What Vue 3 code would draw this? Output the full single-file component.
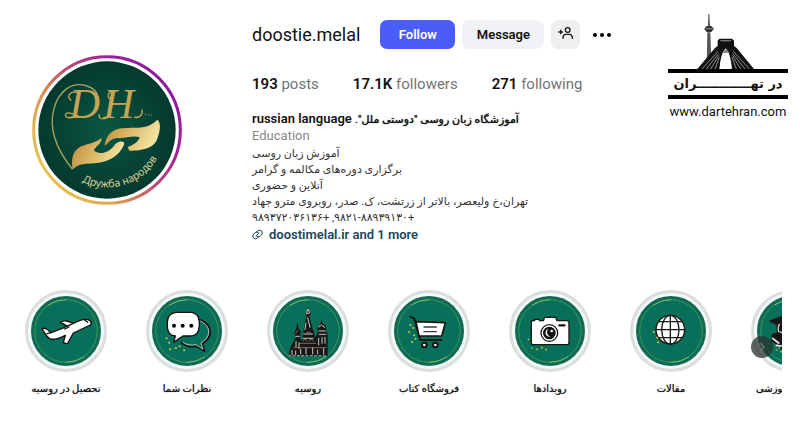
<script setup>

import { ref } from 'vue'

const username = ref("doostie.melal");

const stats = ref([
  { value: "193", label: "posts" },
  { value: "17.1K", label: "followers" },
  { value: "271", label: "following" }
]);

const bio = ref([
  "آموزش زبان روسی",
  "برگزاری دوره‌های مکالمه و گرامر",
  "آنلاین و حضوری",
  "تهران،خ ولیعصر، بالاتر از زرتشت، ک. صدر، روبروی مترو جهاد",
  "+۹۸۲۱-۸۸۹۳۹۱۳۰, +۹۸۹۳۷۲۰۳۶۱۳۶"
]);

const highlights = ref([
  { icon: "plane", label: "تحصیل در روسیه" },
  { icon: "chat", label: "نظرات شما" },
  { icon: "castle", label: "روسیه" },
  { icon: "cart", label: "فروشگاه کتاب" },
  { icon: "camera", label: "رویدادها" },
  { icon: "globe", label: "مقالات" },
  { icon: "graduate", label: "آموزشی" }
]);

const following = ref(false);

const toggleFollow = () => {
  following.value = !following.value;
};

const strip = ref(null);

const nextHighlights = () => {
  strip.value.scrollBy({ left: 242, behavior: "smooth" });
};

</script>

<template>
  <div class="page">
    <header class="profile">
      <svg class="avatar" viewBox="0 0 450 450" role="img" aria-label="Дружба народов">
        <defs>
          <linearGradient id="ring" x1="0.1" y1="0.8" x2="0.9" y2="0.2">
            <stop offset="0" stop-color="#e8c04e" />
            <stop offset="0.25" stop-color="#dda04c" />
            <stop offset="0.5" stop-color="#c4506c" />
            <stop offset="0.8" stop-color="#a0209a" />
            <stop offset="1" stop-color="#8c1c9e" />
          </linearGradient>
          <radialGradient id="disc">
            <stop offset="0" stop-color="#0a5643" />
            <stop offset="1" stop-color="#04392e" />
          </radialGradient>
          <linearGradient id="gold" x1="0" y1="0" x2="1" y2="0.3">
            <stop offset="0" stop-color="#b8893a" />
            <stop offset="0.5" stop-color="#dcb765" />
            <stop offset="1" stop-color="#f3e3a0" />
          </linearGradient>
          <path id="motto" d="M150 380 A172 172 0 0 0 390 175" />
        </defs>
        <circle cx="225" cy="225" r="220" fill="#fff" stroke="url(#ring)" stroke-width="9" />
        <circle cx="225" cy="225" r="206" fill="url(#disc)" />
        <path d="M121 342 C75 285 48 225 66 160 C82 105 122 78 165 93 C184 99 196 110 199 128" fill="none" stroke="#a9a35c" stroke-width="4" />
        <text class="monogram" x="112 214" y="188">DH</text>
        <path d="M138 188 C126 174 102 168 100 180 C100 192 124 190 140 180 M134 112 C112 108 102 128 118 136 M226 188 C212 196 198 190 202 178 M250 108 C232 104 222 124 234 132 M306 186 C322 192 334 178 330 164" fill="none" stroke="#c6a455" stroke-width="4" />
        <path d="M338 178 h5 m5 2 h4 m5 0 h3" stroke="#9a965c" stroke-width="3" />
        <path d="M122 344 C118 315 120 292 140 278 C160 266 181 269 209 249 C210 263 194 272 185 286 C202 303 233 293 251 266 C266 256 280 259 276 269 C260 305 229 318 200 323 C163 327 138 323 122 344 Z" fill="url(#gold)" />
        <path d="M218 273 C221 245 237 224 268 220 C307 215 347 226 376 194 C389 204 383 232 377 248 C369 279 331 287 292 287 L287 276 C302 271 317 264 323 247 C302 240 279 252 255 249 C236 251 227 265 218 273 Z" fill="url(#gold)" />
        <text class="motto"><textPath href="#motto">Дружба народов</textPath></text>
      </svg>

      <section class="details">
        <div class="title-row">
          <h1 class="username">{{ username }}</h1>
          <button type="button" class="btn btn-primary" @click="toggleFollow">{{ following ? "Following" : "Follow" }}</button>
          <button type="button" class="btn btn-message">Message</button>
          <button type="button" class="btn btn-icon" aria-label="Similar accounts">
            <svg viewBox="0 0 45 36" width="15" height="12" fill="none" stroke="#161616" stroke-width="4">
              <circle cx="29" cy="9" r="7" />
              <path d="M15 35 V31 Q16 22 24 22 H34 Q42 22 43 31 V35 M1 15 H15 M8 8 V22" />
            </svg>
          </button>
          <button type="button" class="more" aria-label="Options">
            <svg viewBox="0 0 20 6" width="20" height="6"><circle cx="3" cy="3" r="2" /><circle cx="10" cy="3" r="2" /><circle cx="17" cy="3" r="2" /></svg>
          </button>
        </div>

        <ul class="stats">
          <li v-for="stat in stats" :key="stat.label"><b>{{ stat.value }}</b> {{ stat.label }}</li>
        </ul>

        <div class="bio">
          <h2 dir="rtl"><span class="persian">آموزشگاه زبان روسی "دوستی ملل".</span> russian language</h2>
          <p class="category">Education</p>
          <p v-for="line in bio" :key="line" dir="rtl">{{ line }}</p>
          <a href="#" class="site">
            <svg viewBox="0 0 33 33" width="11" height="11" fill="none" stroke="#24445a" stroke-width="3" stroke-linecap="round">
              <path d="M13 9 L18 5 Q24 1 29 6 Q33 12 28 18 L24 22 Q19 26 14 22 M20 24 L15 28 Q9 32 4 27 Q0 21 5 15 L9 11 Q14 7 19 11 M12 21 L21 12" />
            </svg>
            <span>doostimelal.ir and 1 more</span>
          </a>
        </div>
      </section>

      <aside class="brand">
        <svg class="skyline" viewBox="0 0 360 165">
          <path d="M121 0 h3 l2 36 h-6 Z M118 55 h9 l4 110 h-15 Z" fill="#555" />
          <path d="M108 44 L116 36 H130 L138 44 L130 54 H116 Z" fill="#333" />
          <path d="M110 44 H136" stroke="#bbb" stroke-width="2" />
          <path d="M154 74 H192 L198 80 V96 L206 102 L258 165 H191 C190 140 184 125 173 116 C162 125 156 140 155 165 H88 L141 102 L149 96 V80 Z" fill="#111" />
          <path d="M173 103 Q157 119 155 165 H191 Q189 119 173 103" fill="#fff" />
          <path d="M163 117 L173 105 L183 117 Z" fill="#888" />
          <path d="M157 80 H189" stroke="#777" stroke-width="4" />
          <path d="M102 165 L150 112 M115 165 L152 118 M128 165 L153 124 M141 165 L154 130 M244 165 L196 112 M231 165 L194 118 M218 165 L193 124 M205 165 L192 130" stroke="#ccc" stroke-width="2" />
        </svg>
        <div class="brand-name" dir="rtl">در تهــــــــــــران</div>
        <a href="#">www.dartehran.com</a>
      </aside>
    </header>

    <nav class="highlights" aria-label="Highlights">
      <div class="strip" ref="strip">
        <a v-for="item in highlights" :key="item.icon" href="#" class="highlight" :class="item.icon">
          <span class="circle">
            <svg viewBox="0 0 246 246" stroke-linejoin="round" stroke-linecap="round">
              <circle cx="123" cy="123" r="102" fill="#08705a" stroke="#186553" stroke-width="6" />
              <circle cx="123" cy="123" r="94" fill="none" stroke="#3c9355" stroke-width="3" />
              <path d="M70 45 A94 94 0 0 1 123 29 M176 201 A94 94 0 0 1 123 217" fill="none" stroke="#7fb866" stroke-width="3" />

              <g v-if="item.icon === 'plane'" fill="#fff" stroke="#111" stroke-width="4">
                <path d="M106 97 Q114 91 125 93 L150 101 L130 110 Z" />
                <path d="M51 116 Q58 113 66 118 L78 128 L112 115 L158 94 Q181 83 196 92 Q202 98 196 105 L145 129 L128 160 Q122 162 115 158 L121 136 Q91 151 76 147 Q65 142 51 116 Z" />
                <path d="M66 131 L78 128 M119 117 L132 111 M180 91 L188 97" fill="none" />
              </g>

              <g v-else-if="item.icon === 'chat'">
                <path d="M162 90 C203 105 199 143 169 161 L175 183 L151 168 Q123 174 106 157" fill="none" stroke="#111" stroke-width="6" />
                <path d="M163 93 C198 109 195 141 165 159 L171 178 L150 164 Q126 169 111 157" fill="none" stroke="#fff" stroke-width="2" />
                <path d="M90 67 H136 Q159 70 160 96 V108 Q158 138 134 138 H111 L83 157 L88 138 Q65 136 64 110 V96 Q65 70 90 67 Z" fill="#fff" stroke="#111" stroke-width="4" />
                <circle v-for="x in [84, 110, 136]" :key="x" :cx="x" cy="107" r="6" />
                <path d="M61 145 h1 M69 158 h1 M72 178 h1 M89 174 h1 M100 169 h1 M114 181 h1" stroke="#b5bd48" stroke-width="6" />
              </g>

              <g v-else-if="item.icon === 'castle'" fill="#171717">
                <path d="M123 48 L126 62 L132 71 L127 78 L137 117 L143 134 V145 L153 126 L150 113 L160 104 L163 88 L166 100 L177 109 L177 121 L182 132 V198 H64 L70 172 L79 156 L86 145 L82 128 L88 115 L91 94 L95 117 L102 124 L98 144 L106 152 L109 122 L119 78 L114 71 L121 62 Z" />
                <path d="M123 58 L128 69 L119 71 Z M122 83 L129 112 M117 99 L114 119 M110 132 H136 M108 145 H138 M86 139 L97 139 M155 111 L164 105 L173 112 M156 123 H175 M157 133 H177 M87 154 V170 M96 158 V176 M155 145 V165 M165 142 V160 M174 142 V160 M75 181 V194 M86 183 V194 M101 178 V192 M117 174 V192 M137 174 V192 M152 180 V192 M170 176 V192" fill="none" stroke="#c9c9c2" stroke-width="3" />
                <path d="M100 160 H146 M108 153 Q114 142 120 153 M127 153 Q133 142 139 153 M80 173 H177 M91 122 L86 131 M119 127 H130" fill="none" stroke="#b98f8a" stroke-width="2" />
                <path d="M65 197 H182" stroke="#eee" stroke-width="2" stroke-dasharray="6 7" />
              </g>

              <g v-else-if="item.icon === 'cart'">
                <path d="M67 80 L79 86 L97 150 H160" fill="none" stroke="#151515" stroke-width="6" />
                <path d="M84 95 L172 98 L161 138 H93 Z" fill="#fff" stroke="#151515" stroke-width="5" />
                <path d="M108 111 H145 M108 125 H145" stroke="#51333e" stroke-width="4" />
                <circle v-for="x in [109, 142]" :key="x" :cx="x" cy="165" r="7" fill="#fff" stroke="#111" stroke-width="6" />
                <path d="M67 105 h1 M75 114 h1 M63 126 h1 M78 136 h1 M72 156 h1 M82 146 h1" stroke="#b5bd48" stroke-width="6" />
              </g>

              <g v-else-if="item.icon === 'camera'" fill="#fff" stroke="#161616" stroke-width="4">
                <path d="M72 92 H77 V88 H91 V92 H103 L107 82 H140 L144 92 H174 Q180 93 180 99 V158 Q180 164 174 164 H73 Q67 164 67 158 V98 Q67 92 72 92 Z" />
                <circle cx="121" cy="129" r="25" />
                <circle cx="121" cy="129" r="17" fill="#111" />
                <path d="M118 115 Q108 121 110 133 Q114 142 124 141 Q116 137 114 129 Q113 121 118 115 Z" stroke="none" />
                <circle cx="128" cy="123" r="4" stroke="none" />
                <path d="M151 106 H166" stroke-width="7" />
                <path d="M58 148 h1 M68 174 h1 M83 178 h1 M98 173 h1 M111 179 h1" stroke="#b5bd48" stroke-width="5" />
              </g>

              <g v-else-if="item.icon === 'globe'" fill="none" stroke="#171717" stroke-width="4">
                <circle cx="121" cy="119" r="43" fill="#fff" />
                <ellipse cx="121" cy="119" rx="26" ry="43" />
                <path d="M121 76 V162 M78 119 H164 M86 95 H156 M86 143 H156" />
                <path d="M71 126 h1 M81 143 h1 M84 157 h1" stroke="#b5bd48" stroke-width="6" />
              </g>

              <g v-else fill="#161616">
                <path d="M53 93 L98 75 L155 94 L106 119 L81 108 Z M76 107 H125 V138 Q96 154 78 128 Z" />
                <path d="M85 103 Q79 116 84 126 M89 126 Q99 133 113 125" fill="none" stroke="#ddd" stroke-width="4" />
                <path d="M62 132 L80 127 L94 139 H120 V187 H97 L83 168 L60 154 Z" />
                <path d="M65 145 L83 159 M76 166 L92 168" stroke="#eee" stroke-width="5" />
                <path d="M76 180 h1 M85 174 h1 M90 185 h1" stroke="#b5bd48" stroke-width="5" />
              </g>
            </svg>
          </span>
          <span class="label" dir="rtl">{{ item.label }}</span>
        </a>
      </div>
      <button type="button" class="next" aria-label="Next" @click="nextHighlights">
        <svg viewBox="0 0 24 24" width="12" height="12"><path d="M8 4 L16 12 L8 20" fill="none" stroke="#687773" stroke-width="3" /></svg>
      </button>
    </nav>
  </div>
</template>

<style>
body {
  background-color: #fff;
}
</style>

<style scoped>
.page {
  font-family: Roboto, "DejaVu Sans", sans-serif;
  color: #111;
  padding: 14px 12px 24px 0;
}

h1, h2, p, ul {
  margin: 0;
  padding: 0;
}

a {
  color: inherit;
  text-decoration: none;
}

button {
  border: none;
  padding: 0;
  font-family: inherit;
  cursor: pointer;
}

.profile {
  display: flex;
  align-items: flex-start;
  padding-left: 32px;
}

.avatar {
  flex: none;
  width: 150px;
  height: 150px;
  margin: 41px 70px 0 0;
}

.monogram {
  font-family: "Liberation Serif", serif;
  font-style: italic;
  font-size: 128px;
  fill: #c6a455;
}

.motto {
  font-family: "Noto Sans", sans-serif;
  font-size: 32px;
  fill: #ddcf98;
}

.details {
  flex: 1;
  min-width: 0;
  padding-top: 6px;
}

.title-row {
  display: flex;
  align-items: center;
  gap: 7px;
}

.username {
  font-size: 18px;
  font-weight: 400;
  margin-right: 13px;
}

.btn {
  height: 29px;
  border-radius: 7px;
  font-size: 13px;
  font-weight: 600;
}

.btn-primary {
  width: 75px;
  color: #fff;
  background-color: #4a5df9;
}

.btn-message {
  width: 82px;
  color: #111;
  background-color: #f0f2f5;
}

.btn-icon {
  width: 29px;
  background-color: #efefef;
}

.more {
  display: flex;
  margin-left: 5px;
  background: none;
}

.stats {
  display: flex;
  gap: 34px;
  margin-top: 25px;
  list-style: none;
  font-size: 15px;
  line-height: 20px;
  color: #737373;
}

.stats b {
  font-weight: 600;
  color: #111;
}

.bio {
  margin-top: 16px;
  font-size: 13px;
  line-height: 17px;
}

.bio h2,
.bio p {
  height: 17px;
  text-align: left;
  white-space: nowrap;
}

.bio h2 {
  font-size: 13px;
  font-weight: 600;
}

.bio .persian {
  font-size: 11px;
  font-weight: 400;
  text-shadow: 0 0 1px #111;
}

.bio p[dir] {
  height: 16px;
  font-size: 11px;
  line-height: 16px;
  color: #333;
}

.bio .category {
  margin-bottom: 2px;
  color: #888;
}

.site {
  display: flex;
  align-items: center;
  gap: 6px;
  font-weight: 600;
  color: #24445a;
}

.brand {
  width: 120px;
  text-align: center;
}

.skyline {
  display: block;
  width: 120px;
  height: 55px;
}

.brand-name {
  border-top: 4px solid #000;
  border-bottom: 4px solid #000;
  font-family: "DejaVu Sans", sans-serif;
  font-size: 13px;
  font-weight: 700;
  line-height: 22px;
  white-space: nowrap;
}

.brand a {
  display: block;
  margin-top: 4px;
  font-family: Roboto, sans-serif;
  font-size: 13px;
  line-height: 18px;
}

.highlights {
  position: relative;
  margin: 47px 6px 0 0;
}

.strip {
  display: flex;
  gap: 39px;
  padding-left: 25px;
  overflow: hidden;
}

.highlight {
  display: flex;
  flex-direction: column;
  flex: none;
  width: 82px;
}

.circle {
  box-sizing: border-box;
  height: 82px;
  border: 3px solid #dcdede;
  border-radius: 50%;
  background-color: #effcf9;
}

.circle svg {
  display: block;
  margin: -3px;
  width: 82px;
  height: 82px;
}

.label {
  margin-top: 8px;
  font-size: 10px;
  line-height: 18px;
  text-align: center;
  text-shadow: 0 0 1px #555;
  white-space: nowrap;
}

.graduate .label {
  padding-left: 5px;
  text-align: left;
}

.next {
  position: absolute;
  top: 46px;
  right: 9px;
  display: flex;
  align-items: center;
  justify-content: center;
  width: 22px;
  height: 22px;
  border-radius: 50%;
  background-color: rgba(40, 50, 48, 0.75);
}
</style>
